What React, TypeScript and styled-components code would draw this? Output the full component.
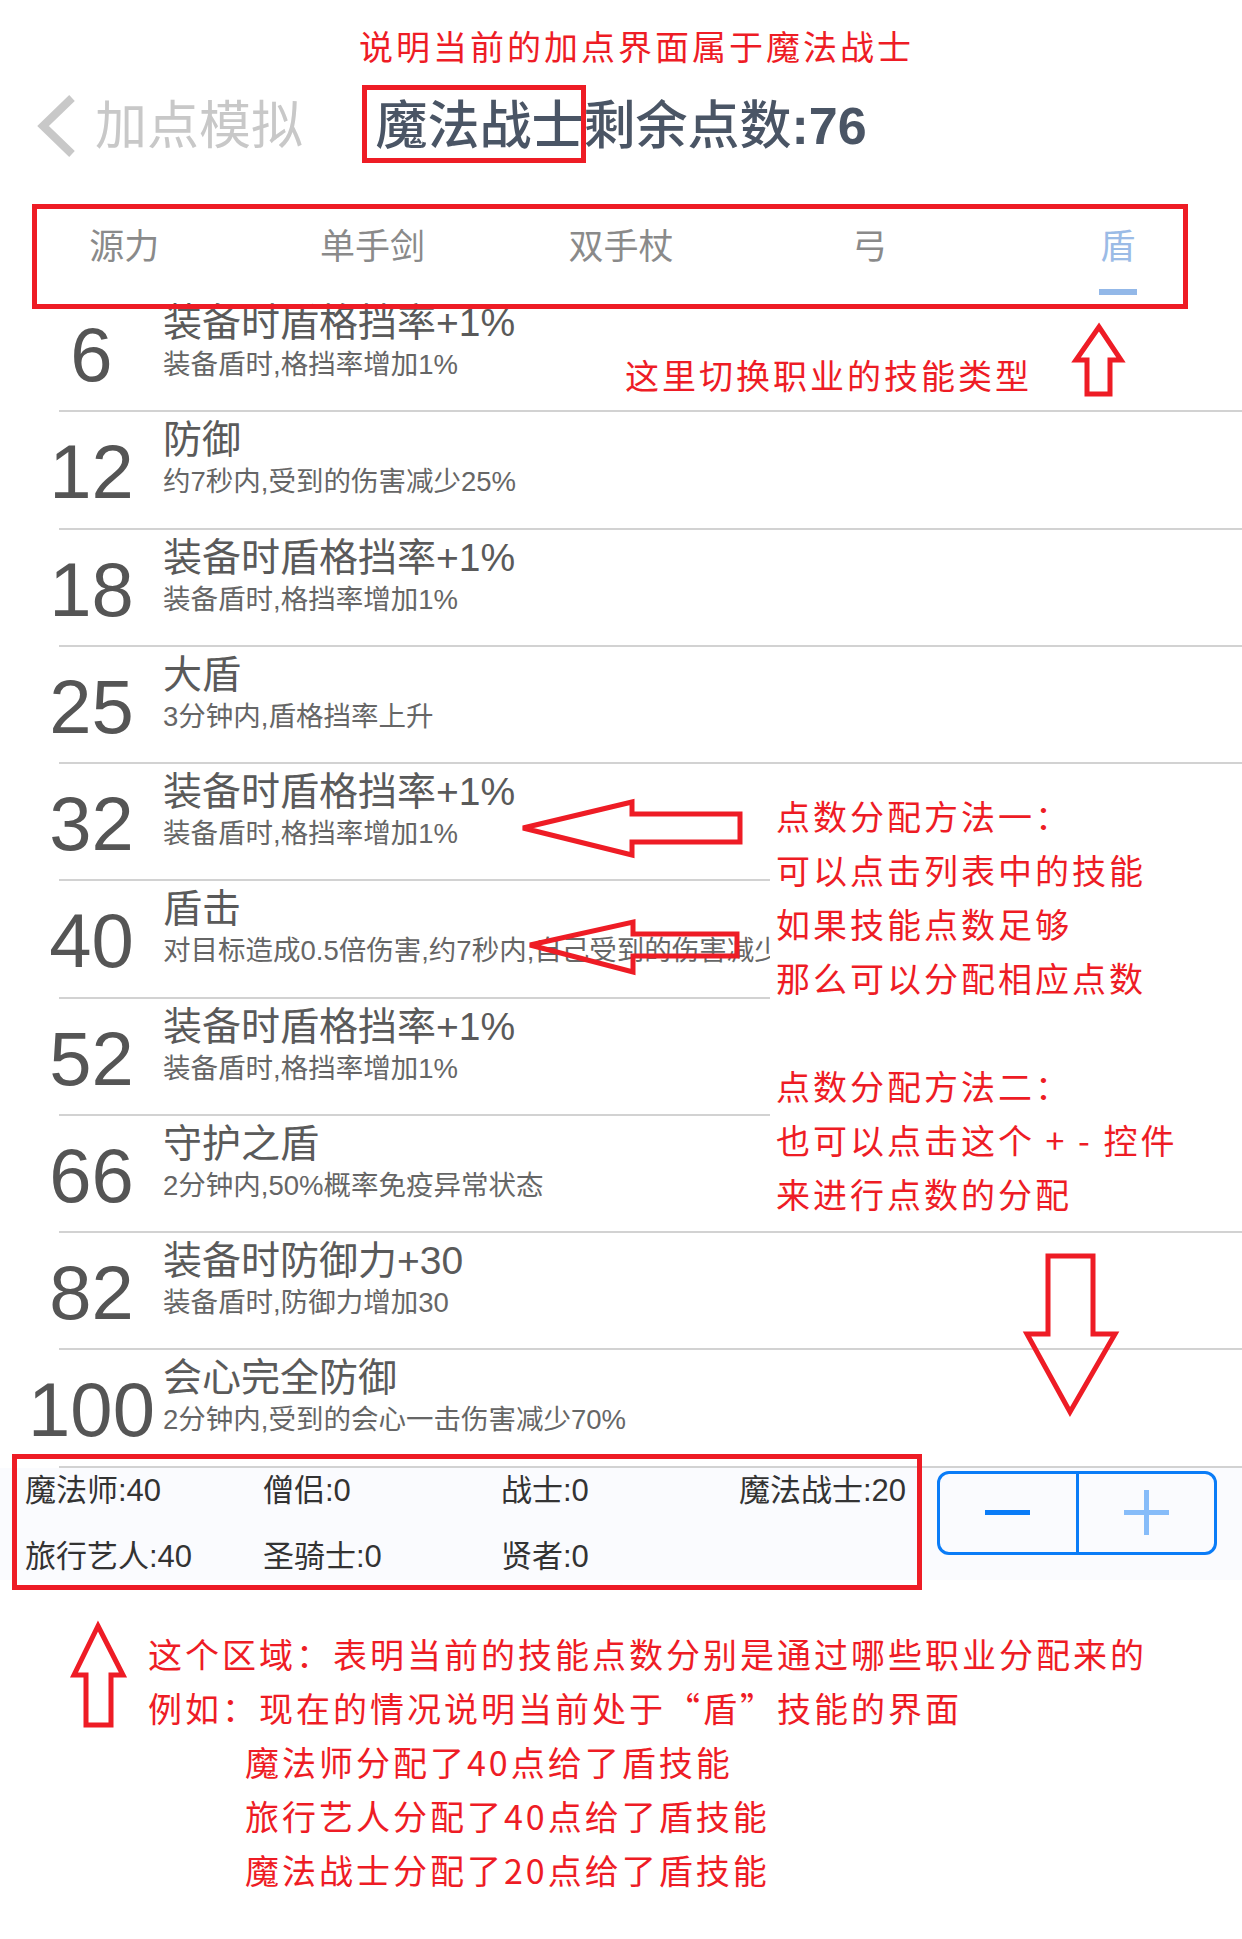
import React from "react";
import styled, { createGlobalStyle } from "styled-components";

const RED = "#ee1c25";
const NOTE_FONT = `"Noto Sans CJK SC", "Noto Sans CJK TC", sans-serif`;

const GlobalStyle = createGlobalStyle`
  html, body { margin: 0; padding: 0; background: #ffffff; }
  body { font-family: "Liberation Sans", "Noto Sans CJK SC", sans-serif; }
  * { box-sizing: border-box; }
`;

const Page = styled.div`
  position: relative;
  width: 1242px;
  min-height: 1939px;
  background: #ffffff;
  overflow: hidden;
`;

const TopNote = styled.div`
  height: 73px;
  padding: 19px 0 0 359px;
  font-family: ${NOTE_FONT};
  font-size: 34px;
  letter-spacing: 3px;
  line-height: 54px;
  color: ${RED};
  white-space: nowrap;
`;

const NavBar = styled.header`
  display: grid;
  grid-template-columns: 1fr auto 1fr;
  align-items: center;
  height: 106px;
`;

const Back = styled.div`
  justify-self: start;
  display: flex;
  align-items: center;
  gap: 20px;
  padding-left: 37px;
  font-size: 52px;
  line-height: 1;
  color: #c8c8c8;
`;

const Title = styled.h1`
  margin: 0;
  font-size: 52px;
  font-weight: 500;
  line-height: 1;
  color: #4a5565;
  white-space: nowrap;
`;

const Points = styled.span`
  font-weight: 700;
`;

const TabBar = styled.nav`
  display: grid;
  grid-template-columns: repeat(5, 1fr);
  height: 116px;
  background: #ffffff;
`;

const Tab = styled.div<{ $active?: boolean }>`
  display: flex;
  flex-direction: column;
  align-items: center;
  justify-content: flex-end;
  font-size: 35px;
  color: ${(p) => (p.$active ? "#9bbbe6" : "#8a8a8a")};
`;

const TabLabel = styled.span`
  line-height: 44px;
  margin-bottom: 20px;
`;

const TabIndicator = styled.span<{ $active?: boolean }>`
  width: 38px;
  height: 6px;
  background: ${(p) => (p.$active ? "#93b8e8" : "transparent")};
`;

const List = styled.ul`
  margin: 0;
  padding: 0;
  list-style: none;
`;

const Row = styled.li`
  display: flex;
  flex-direction: column;
  height: 117.25px;
`;

const RowBody = styled.div`
  flex: 1;
  display: grid;
  grid-template-columns: 163px 1fr;
`;

const Level = styled.div`
  padding: 22px 0 0 20px;
  text-align: center;
  font-family: "Liberation Sans", sans-serif;
  font-size: 76px;
  line-height: 76px;
  color: #555555;
`;

const Info = styled.div`
  display: flex;
  flex-direction: column;
  padding-top: 6px;
  min-width: 0;
`;

const SkillName = styled.div`
  font-size: 39px;
  line-height: 44px;
  color: #5a5a5a;
  white-space: nowrap;
`;

const SkillDesc = styled.div`
  margin-top: 2px;
  font-size: 27.5px;
  line-height: 36px;
  color: #666666;
  white-space: nowrap;
`;

const Divider = styled.div`
  flex-shrink: 0;
  height: 2px;
  margin-left: 59px;
  background: #d2d2d2;
`;

const Footer = styled.footer`
  display: flex;
  align-items: flex-start;
  height: 112px;
  background: #fafbfe;
`;

const Stats = styled.div`
  display: grid;
  grid-template-columns: 238px 238px 238px 173px;
  row-gap: 20px;
  padding-left: 25px;
  font-size: 31px;
  line-height: 46px;
  color: #333333;
  white-space: nowrap;
`;

const Stepper = styled.div`
  display: flex;
  width: 280px;
  height: 84px;
  margin: 3px 0 0 25px;
  border: 3px solid #0a7cf7;
  border-radius: 12px;
  overflow: hidden;
`;

const StepButton = styled.button<{ $divider?: boolean }>`
  flex: 1;
  display: flex;
  align-items: center;
  justify-content: center;
  padding: 0;
  border: 0;
  border-left: ${(p) => (p.$divider ? "3px solid #0a7cf7" : "0")};
  background: transparent;
  cursor: pointer;
`;

const BottomNote = styled.section`
  margin-top: 47px;
  padding-left: 148px;
  font-family: ${NOTE_FONT};
  font-size: 34px;
  letter-spacing: 3px;
  line-height: 54px;
  color: ${RED};
`;

const NoteLine = styled.div<{ $indent?: boolean }>`
  padding-left: ${(p) => (p.$indent ? 97 : 0)}px;
  white-space: nowrap;
`;

/* ---- annotation overlays ---- */

const Frame = styled.div`
  position: absolute;
  border: 5px solid ${RED};
  pointer-events: none;
`;

const TitleFrame = styled(Frame)`
  left: 362px;
  top: 85px;
  width: 224px;
  height: 78px;
`;

const TabsFrame = styled(Frame)`
  left: 32px;
  top: 204px;
  width: 1156px;
  height: 105px;
`;

const StatsFrame = styled(Frame)`
  left: 12px;
  top: 1454px;
  width: 910px;
  height: 136px;
`;

const FloatNote = styled.div`
  position: absolute;
  font-family: ${NOTE_FONT};
  font-size: 34px;
  letter-spacing: 3px;
  line-height: 54px;
  color: ${RED};
  white-space: nowrap;
`;

const TabsNote = styled(FloatNote)`
  left: 625px;
  top: 348px;
`;

const MethodNote = styled(FloatNote)`
  left: 770px;
  top: 773px;
  width: 472px;
  height: 452px;
  padding: 16px 0 0 6px;
  background: #ffffff;
`;

const NoteGap = styled.div`
  height: 54px;
`;

const ArrowLayer = styled.svg`
  position: absolute;
  left: 0;
  top: 0;
  width: 1242px;
  height: 1939px;
  pointer-events: none;
`;

const skills = [
  { lv: 6, name: "装备时盾格挡率+1%", desc: "装备盾时,格挡率增加1%" },
  { lv: 12, name: "防御", desc: "约7秒内,受到的伤害减少25%" },
  { lv: 18, name: "装备时盾格挡率+1%", desc: "装备盾时,格挡率增加1%" },
  { lv: 25, name: "大盾", desc: "3分钟内,盾格挡率上升" },
  { lv: 32, name: "装备时盾格挡率+1%", desc: "装备盾时,格挡率增加1%" },
  { lv: 40, name: "盾击", desc: "对目标造成0.5倍伤害,约7秒内,自己受到的伤害减少" },
  { lv: 52, name: "装备时盾格挡率+1%", desc: "装备盾时,格挡率增加1%" },
  { lv: 66, name: "守护之盾", desc: "2分钟内,50%概率免疫异常状态" },
  { lv: 82, name: "装备时防御力+30", desc: "装备盾时,防御力增加30" },
  { lv: 100, name: "会心完全防御", desc: "2分钟内,受到的会心一击伤害减少70%" },
];

const tabs = ["源力", "单手剑", "双手杖", "弓", "盾"];

const stats = [
  "魔法师:40",
  "僧侣:0",
  "战士:0",
  "魔法战士:20",
  "旅行艺人:40",
  "圣骑士:0",
  "贤者:0",
];

export default function App() {
  return (
    <Page>
      <GlobalStyle />
      <TopNote>说明当前的加点界面属于魔法战士</TopNote>

      <NavBar>
        <Back>
          <svg width="38" height="62" viewBox="0 0 38 62" aria-hidden="true">
            <polyline
              points="35,3 6,31 35,59"
              fill="none"
              stroke="#c8c8c8"
              strokeWidth="8"
              strokeLinejoin="miter"
            />
          </svg>
          <span>加点模拟</span>
        </Back>
        <Title>
          魔法战士剩余点数<Points>:76</Points>
        </Title>
        <span />
      </NavBar>

      <TabBar>
        {tabs.map((t, i) => (
          <Tab key={t} $active={i === 4}>
            <TabLabel>{t}</TabLabel>
            <TabIndicator $active={i === 4} />
          </Tab>
        ))}
      </TabBar>

      <List>
        {skills.map((s, i) => (
          <Row key={i}>
            <RowBody>
              <Level>{s.lv}</Level>
              <Info>
                <SkillName>{s.name}</SkillName>
                <SkillDesc>{s.desc}</SkillDesc>
              </Info>
            </RowBody>
            <Divider />
          </Row>
        ))}
      </List>

      <Footer>
        <Stats>
          {stats.map((s) => (
            <span key={s}>{s}</span>
          ))}
        </Stats>
        <Stepper>
          <StepButton aria-label="减少">
            <svg width="45" height="5" viewBox="0 0 45 5" aria-hidden="true">
              <rect x="0" y="0" width="45" height="5" fill="#0a7cf7" />
            </svg>
          </StepButton>
          <StepButton $divider aria-label="增加">
            <svg width="45" height="45" viewBox="0 0 45 45" aria-hidden="true">
              <rect x="0" y="20" width="45" height="5" fill="#86bcf9" />
              <rect x="20" y="0" width="5" height="45" fill="#86bcf9" />
            </svg>
          </StepButton>
        </Stepper>
      </Footer>

      <BottomNote>
        <NoteLine>这个区域：表明当前的技能点数分别是通过哪些职业分配来的</NoteLine>
        <NoteLine>例如：现在的情况说明当前处于“盾”技能的界面</NoteLine>
        <NoteLine $indent>魔法师分配了40点给了盾技能</NoteLine>
        <NoteLine $indent>旅行艺人分配了40点给了盾技能</NoteLine>
        <NoteLine $indent>魔法战士分配了20点给了盾技能</NoteLine>
      </BottomNote>

      {/* annotation overlays */}
      <TitleFrame />
      <TabsFrame />
      <StatsFrame />
      <TabsNote>这里切换职业的技能类型</TabsNote>
      <MethodNote>
        <div>点数分配方法一：</div>
        <div>可以点击列表中的技能</div>
        <div>如果技能点数足够</div>
        <div>那么可以分配相应点数</div>
        <NoteGap />
        <div>点数分配方法二：</div>
        <div>也可以点击这个 + - 控件</div>
        <div>来进行点数的分配</div>
      </MethodNote>

      <ArrowLayer viewBox="0 0 1242 1939" aria-hidden="true">
        <g fill="none" stroke={RED} strokeWidth="5" strokeLinejoin="miter">
          <polygon points="1099,327 1121,360 1110,360 1110,394 1087,394 1087,360 1076,360" />
          <polygon points="523,828 632,802 632,814 740,814 740,842 632,842 632,855" />
          <polygon points="530,945 633,922 633,934 737,934 737,956 633,956 633,972" />
          <polygon points="1048,1256 1093,1256 1093,1334 1115,1334 1070,1412 1027,1334 1048,1334" />
          <polygon points="98,1626 123,1675 111,1675 111,1725 86,1725 86,1675 74,1675" />
        </g>
      </ArrowLayer>
    </Page>
  );
}
